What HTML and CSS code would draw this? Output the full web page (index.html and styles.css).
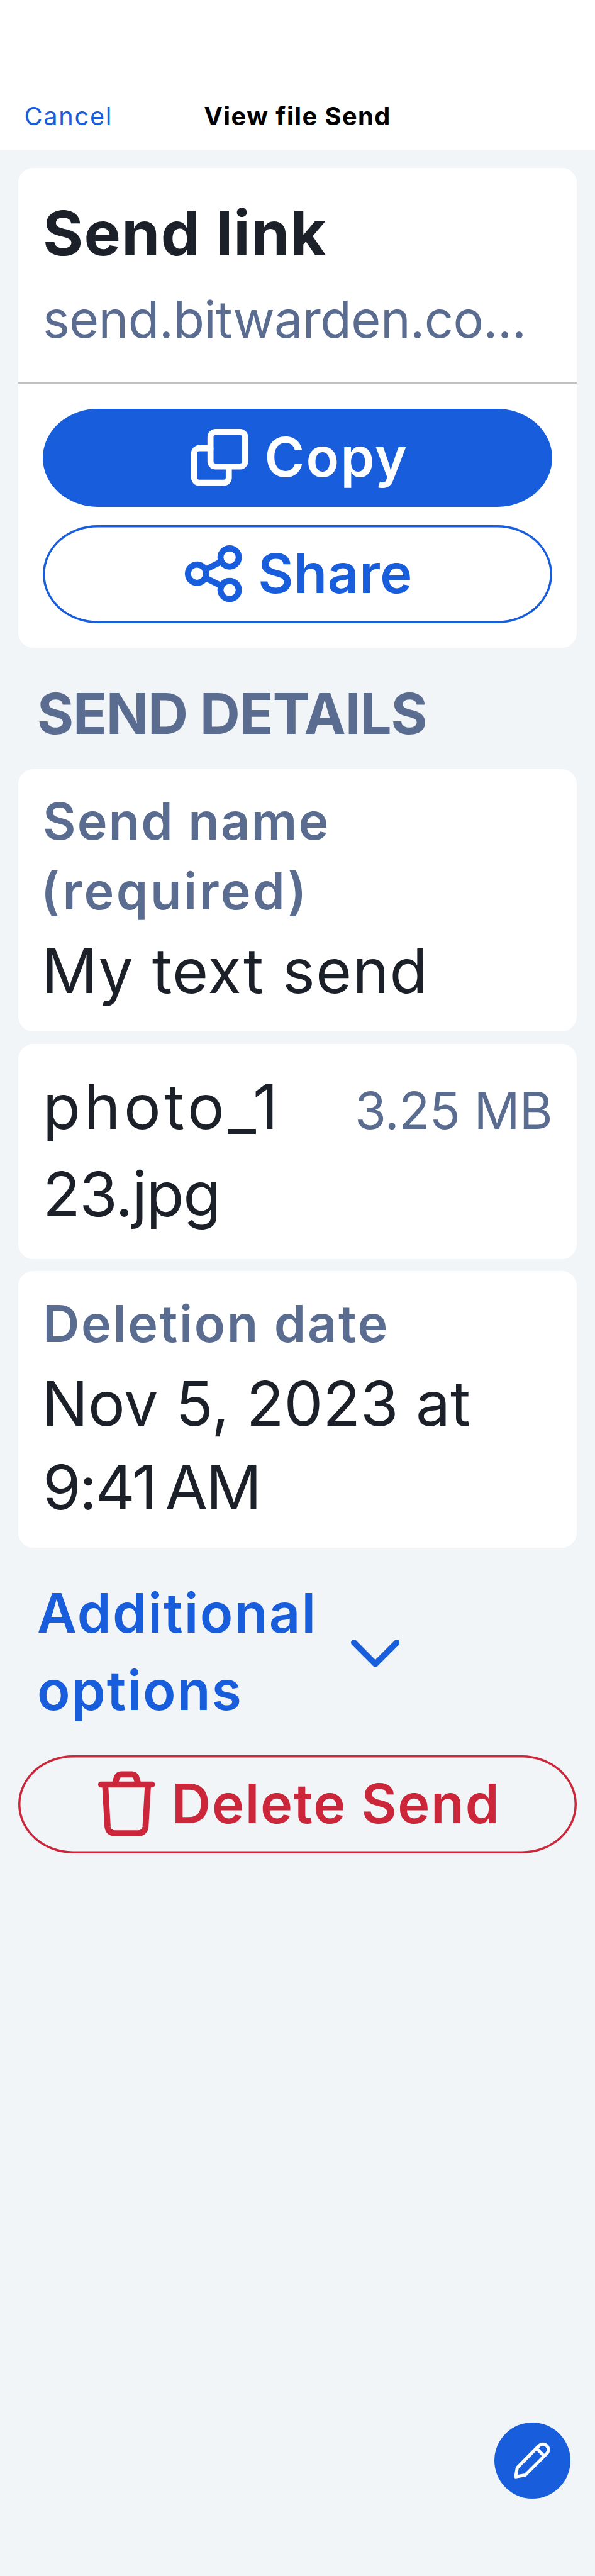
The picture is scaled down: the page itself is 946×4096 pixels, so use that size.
FILE: index.html
```html
<!DOCTYPE html>
<html lang="en">
<head>
<meta charset="utf-8">
<title>View file Send</title>
<link rel="stylesheet" href="styles.css">
</head>
<body>
<header class="nav">
  <a class="nav-cancel">Cancel</a>
  <h1 class="nav-title">View file Send</h1>
</header>
<main class="content">
  <section class="card link-card">
    <div class="link-head">
      <h2 class="link-title">Send link</h2>
      <p class="link-url">send.bitwarden.co...</p>
    </div>
    <div class="link-actions">
      <button class="btn btn-primary">
        <svg class="icon" viewBox="0 0 144 144"><rect x="54" y="22" width="68" height="68" rx="10"/><path d="M54 54H32a10 10 0 0 0-10 10v48a10 10 0 0 0 10 10h48a10 10 0 0 0 10-10V90"/></svg>
        <span class="copy-text">Copy</span>
      </button>
      <button class="btn btn-outline">
        <svg class="icon" viewBox="0 0 144 144"><circle cx="104" cy="40" r="18"/><circle cx="40" cy="72" r="18"/><circle cx="104" cy="104" r="18"/><path d="M56 64l32-16M56 80l32 16"/></svg>
        <span class="share-text">Share</span>
      </button>
    </div>
  </section>
  <h2 class="section-title">SEND DETAILS</h2>
  <div class="fields">
    <section class="card field">
      <div class="label"><span class="l1">Send name</span><br><span class="l2">(required)</span></div>
      <div class="value v1">My text send</div>
    </section>
    <section class="card file">
      <div class="file-name"><span class="f1">photo_1</span><br><span class="f2">23.jpg</span></div>
      <div class="file-size">3.25 MB</div>
    </section>
    <section class="card field">
      <div class="label l3">Deletion date</div>
      <div class="value"><span class="v2">Nov 5, 2023 at</span><br><span class="v3">9:41&#8239;AM</span></div>
    </section>
  </div>
  <div class="expander">
    <div><span class="e1">Additional</span><br><span class="e2">options</span></div>
    <svg class="chevron" viewBox="0 0 96 54"><path d="M6 6l42 42L90 6"/></svg>
  </div>
  <button class="btn btn-danger">
    <svg class="icon" viewBox="0 0 144 144"><path d="M22 34h100M49.500 32l2.500-9c1.500-6 4-9 9-9h22c5 0 7.500 3 9 9l2.500 9M30 36l4.700 81c.7 8 6.300 13 15.300 13h44c9 0 14.600-5 15.300-13l4.700-81"/></svg>
    <span class="delete-text">Delete Send</span>
  </button>
</main>
<button class="fab"><svg viewBox="0 0 150 150"><path d="M42 106.700L45 88.700 88 45.300a10.900 10.900 0 0 1 15.400 15.400L60.700 103.300zM82.700 50.700L98 66"/></svg></button>
</body>
</html>
```
FILE: styles.css
```css
/* 1rem is ten layout units */
html { font-size: 8.0855px; }
body { margin: 0; min-height: 4096px; background: #f2f5f8; font-family: Inter, sans-serif; color: #1b2029; }
h1, h2, p { margin: 0; }
span { white-space: nowrap; }

.nav { box-sizing: border-box; height: 29.5rem; padding: 19.9rem 4.75rem 0; display: grid; grid-template-columns: 1fr auto 1fr; background: #fff; border-bottom: 1px solid #a9abae; font-size: 4.91rem; line-height: 6rem; }
.nav-cancel { color: #175ddc; letter-spacing: .045em; }
.nav-title { font-size: inherit; font-weight: 700; color: #000; letter-spacing: .0375em; }

.content { padding: 3.5rem 3.6rem 0; }
.card { background: #fff; border-radius: 3rem; }

.link-head { padding: 4.7rem 4.8rem 5.54rem; }
.link-title { font-size: 12.13rem; line-height: 16.4rem; font-weight: 700; letter-spacing: .0139em; }
.link-url { margin-top: 2rem; font-size: 10.01rem; line-height: 13.6rem; color: #5a6d91; letter-spacing: -.0075em; white-space: nowrap; }
.link-actions { display: flex; flex-direction: column; gap: 3.6rem; padding: 4.85rem 4.8rem 4.8rem; border-top: .3rem solid #c0c0c0; }

.btn { box-sizing: border-box; width: 100%; height: 19.3rem; padding: 0 0 .2rem; border: 0; border-radius: 10.8rem / 50%; display: flex; align-items: center; justify-content: center; gap: 1.6rem; font: 600 10.69rem/15rem Inter, sans-serif; background: transparent; }
.btn-primary { background: #175ddc; color: #fff; }
.btn-outline { color: #175ddc; box-shadow: inset 0 0 0 .43rem #175ddc; }
.btn-danger { color: #cb263a; box-shadow: inset 0 0 0 .43rem #cb263a; }
.icon { width: 14.4rem; height: 14.4rem; }
svg { fill: none; stroke: currentColor; stroke-width: 12; stroke-linecap: round; stroke-linejoin: round; }
.copy-text { letter-spacing: .026em; margin-right: .7rem; }
.share-text { letter-spacing: .0085em; margin-right: 1.1rem; }
.delete-text { letter-spacing: .0195em; margin-right: .9rem; }

.section-title { padding: 5.6rem 3.7rem 3.5rem; font-size: 10.98rem; line-height: 14.8rem; font-weight: 700; color: #5a6d91; letter-spacing: -.0135em; }

.fields { display: flex; flex-direction: column; gap: 2.4rem; }
.field { padding: 3.55rem 4.8rem 3.8rem; }
.label { font-size: 10.01rem; line-height: 13.65rem; font-weight: 600; color: #5a6d91; }
.value { margin-top: .55rem; font-size: 12.13rem; line-height: 16.45rem; }
.l1 { letter-spacing: .026em; }
.l2 { letter-spacing: .0445em; margin-left: -.4rem; }
.l3 { letter-spacing: .0325em; }
.v1 { letter-spacing: .0125em; margin-left: -.2rem; }
.v2 { letter-spacing: -.001em; margin-left: -.2rem; }
.v3 { letter-spacing: -.0278em; }
.file { display: flex; justify-content: space-between; align-items: baseline; padding: 3.9rem 4.8rem 4.1rem; }
.file-name { font-size: 12.13rem; line-height: 17.15rem; }
.f1 { letter-spacing: .0565em; }
.f2 { letter-spacing: -.014em; }
.file-size { font-size: 10.01rem; color: #5a6d91; letter-spacing: -.0083em; }

.expander { display: flex; align-items: center; gap: 6.6rem; padding: 5.1rem 3.7rem 5.15rem; font-size: 10.69rem; line-height: 15.25rem; font-weight: 600; color: #175ddc; }
.e1 { letter-spacing: .026em; }
.e2 { letter-spacing: .024em; }
.chevron { width: 9.6rem; height: 5.4rem; margin-top: .7rem; }

.fab { position: fixed; left: 97.2rem; top: 476.4rem; width: 15rem; height: 15rem; padding: 0; border: 0; border-radius: 50%; background: #175ddc; color: #fff; }
.fab svg { display: block; width: 100%; height: 100%; stroke-width: 6.2; }
```
